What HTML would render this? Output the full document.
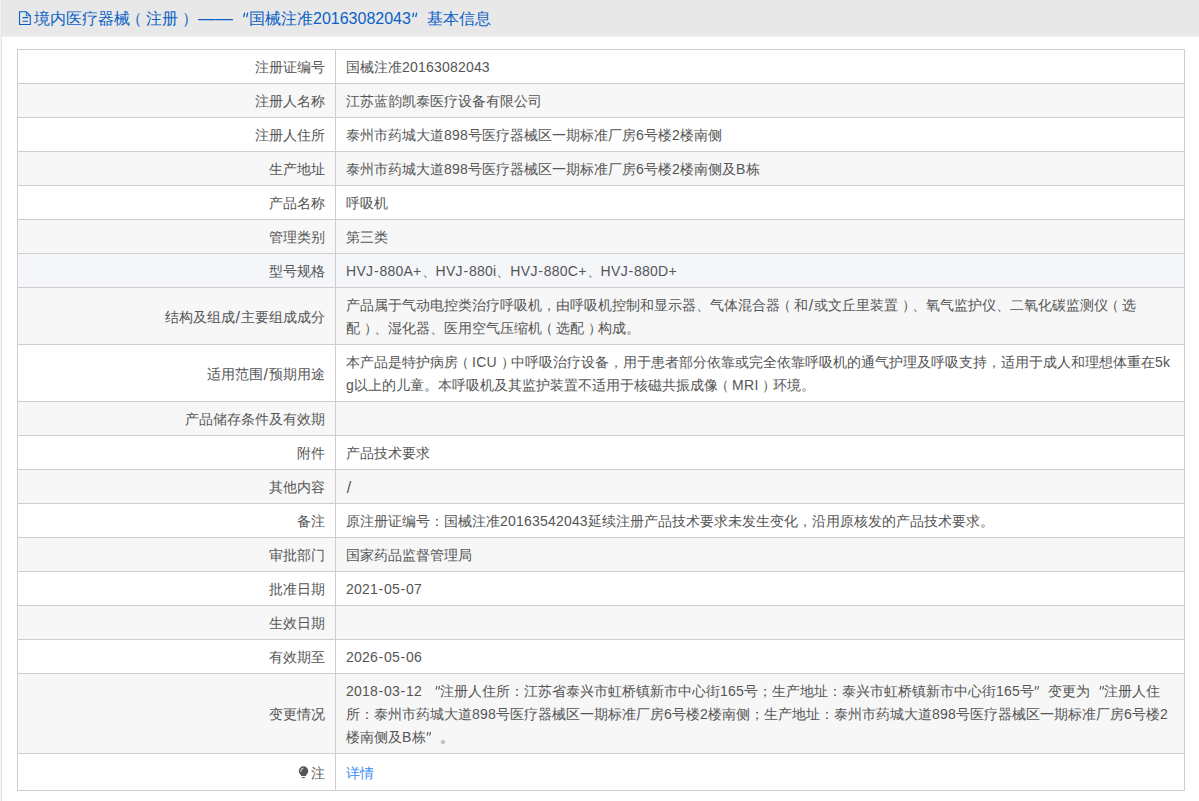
<!DOCTYPE html>
<html><head><meta charset="utf-8">
<style>
html,body{margin:0;padding:0;background:#fff;}
body{width:1199px;height:801px;overflow:hidden;position:relative;font-family:"Liberation Sans",sans-serif;}
.lstrip{position:absolute;left:0;top:0;width:1px;height:801px;background:#f3f3f3;}
.hline{position:absolute;left:2px;right:0;top:36px;height:1px;background:#f1f2f7;}
.lborder{position:absolute;left:1px;top:0;width:1px;height:801px;background:#e6e6e6;}
.hdr{position:absolute;left:2px;top:0;right:0;height:36px;background:#e8e8e8;}
.hdr .t{position:absolute;left:32px;top:7px;font-size:16px;line-height:24px;color:#0a62c6;white-space:nowrap;}
.hdr .a{letter-spacing:0;}
.hdr svg.ic{position:absolute;left:16px;top:11px;}
table{position:absolute;left:17px;top:49px;width:1168px;border-collapse:collapse;font-size:14px;color:#555;}
td{border:1px solid #cfcdcf;padding:6px 10px 4px;line-height:23px;vertical-align:middle;word-break:break-all;}
td.l{width:297px;text-align:right;}
tr.g td{background:#f7f7f7;}
tr.last td{padding-top:8px;padding-bottom:5px;}
tr.h td{background:#f4f6fa;}
a{color:#3a8ef5;text-decoration:none;}
.a{letter-spacing:0.2px;}
.al{letter-spacing:0.3px;}
.hy{margin:0 0.6px;}
.sl{font-size:16px;margin:0 0.8px;position:relative;top:1px;line-height:1px;}
.qo{display:inline-block;width:1em;text-align:right;position:relative;color:transparent;}
.qo svg,.qc svg{position:absolute;left:0;top:5px;}
.qc{display:inline-block;width:1em;text-align:left;position:relative;color:transparent;}
.hdr .qo svg,.hdr .qc svg{top:5px;}
.dash{display:inline-block;width:39px;text-align:right;transform:scaleX(1.09);transform-origin:right center;}
.po{position:relative;left:-0.22em;}
.pc{position:relative;left:0.25em;}
.bulb{display:inline-block;width:11px;height:14px;vertical-align:-2px;margin-right:2px;}
</style></head><body>
<div class="lstrip"></div><div class="lborder"></div><div class="hline"></div>
<div class="hdr"><svg class="ic" width="14" height="15" viewBox="0 0 14 15"><path d="M1.5 0.75H8.3L12.3 4.75V13.5H1.5Z" fill="none" stroke="#0a62c6" stroke-width="1.1"/><path d="M8.3 0.75V4.75H12.3" fill="none" stroke="#0a62c6" stroke-width="0.9"/><path d="M4.5 6.6H10M4.5 10.3H10" stroke="#0a62c6" stroke-width="1.1"/></svg><div class="t">境内医疗器械<span class="po">（</span>注册<span class="pc">）</span><span class="dash">——</span><span class="qo">“<svg width="16" height="8" viewBox="0 0 16 8"><path d="M11.6 1.1L10.8 4.6M14.6 1.1L13.8 4.6" stroke="#0a62c6" stroke-width="1.3" stroke-linecap="round"/></svg></span>国械注准<span class="a">20163082043</span><span class="qc">”<svg width="16" height="8" viewBox="0 0 16 8"><path d="M2.6 1.1L1.8 4.6M5.6 1.1L4.8 4.6" stroke="#0a62c6" stroke-width="1.3" stroke-linecap="round"/></svg></span>基本信息</div></div>
<table>
<tr><td class="l">注册证编号</td><td>国械注准<span class="a">20163082043</span></td></tr>
<tr class="g"><td class="l">注册人名称</td><td>江苏蓝韵凯泰医疗设备有限公司</td></tr>
<tr><td class="l">注册人住所</td><td>泰州市药城大道<span class="a">898</span>号医疗器械区一期标准厂房<span class="a">6</span>号楼<span class="a">2</span>楼南侧</td></tr>
<tr class="g"><td class="l">生产地址</td><td>泰州市药城大道<span class="a">898</span>号医疗器械区一期标准厂房<span class="a">6</span>号楼<span class="a">2</span>楼南侧及<span class="a"><span class="al">B</span></span>栋</td></tr>
<tr><td class="l">产品名称</td><td>呼吸机</td></tr>
<tr class="g"><td class="l">管理类别</td><td>第三类</td></tr>
<tr class="h"><td class="l">型号规格</td><td><span class="a"><span class="al">HVJ</span><span class="hy">-</span>880<span class="al">A+</span></span>、<span class="a"><span class="al">HVJ</span><span class="hy">-</span>880<span class="al">i</span></span>、<span class="a"><span class="al">HVJ</span><span class="hy">-</span>880<span class="al">C+</span></span>、<span class="a"><span class="al">HVJ</span><span class="hy">-</span>880<span class="al">D+</span></span></td></tr>
<tr class="g"><td class="l">结构及组成<span class="a"><span class="sl">/</span></span>主要组成成分</td><td>产品属于气动电控类治疗呼吸机，由呼吸机控制和显示器、气体混合器<span class="po">（</span>和<span class="a"><span class="sl">/</span></span>或文丘里装置<span class="pc">）</span>、氧气监护仪、二氧化碳监测仪<span class="po">（</span>选配<span class="pc">）</span>、湿化器、医用空气压缩机<span class="po">（</span>选配<span class="pc">）</span>构成。</td></tr>
<tr><td class="l">适用范围<span class="a"><span class="sl">/</span></span>预期用途</td><td>本产品是特护病房<span class="po">（</span><span class="a"><span class="al">ICU</span></span><span class="pc">）</span>中呼吸治疗设备，用于患者部分依靠或完全依靠呼吸机的通气护理及呼吸支持，适用于成人和理想体重在<span class="a">5<span class="al">kg</span></span>以上的儿童。本呼吸机及其监护装置不适用于核磁共振成像<span class="po">（</span><span class="a"><span class="al">MRI</span></span><span class="pc">）</span>环境。</td></tr>
<tr class="g"><td class="l">产品储存条件及有效期</td><td></td></tr>
<tr><td class="l">附件</td><td>产品技术要求</td></tr>
<tr class="g"><td class="l">其他内容</td><td><span class="a"><span class="sl">/</span></span></td></tr>
<tr><td class="l">备注</td><td>原注册证编号：国械注准<span class="a">20163542043</span>延续注册产品技术要求未发生变化，沿用原核发的产品技术要求。</td></tr>
<tr class="g"><td class="l">审批部门</td><td>国家药品监督管理局</td></tr>
<tr><td class="l">批准日期</td><td><span class="a">2021<span class="hy">-</span>05<span class="hy">-</span>07</span></td></tr>
<tr class="g"><td class="l">生效日期</td><td></td></tr>
<tr><td class="l">有效期至</td><td><span class="a">2026<span class="hy">-</span>05<span class="hy">-</span>06</span></td></tr>
<tr class="g"><td class="l">变更情况</td><td><span class="a">2018<span class="hy">-</span>03<span class="hy">-</span>12</span> <span class="qo">“<svg width="14" height="8" viewBox="0 0 14 8"><path d="M10.9 1.3L10.2 4.1M13.5 1.3L12.8 4.1" stroke="#555" stroke-width="1.15" stroke-linecap="round"/></svg></span>注册人住所：江苏省泰兴市虹桥镇新市中心街<span class="a">165</span>号；生产地址：泰兴市虹桥镇新市中心街<span class="a">165</span>号<span class="qc">”<svg width="14" height="8" viewBox="0 0 14 8"><path d="M1.9 1.3L1.2 4.1M4.5 1.3L3.8 4.1" stroke="#555" stroke-width="1.15" stroke-linecap="round"/></svg></span>变更为<span class="qo">“<svg width="14" height="8" viewBox="0 0 14 8"><path d="M10.9 1.3L10.2 4.1M13.5 1.3L12.8 4.1" stroke="#555" stroke-width="1.15" stroke-linecap="round"/></svg></span>注册人住所：泰州市药城大道<span class="a">898</span>号医疗器械区一期标准厂房<span class="a">6</span>号楼<span class="a">2</span>楼南侧；生产地址：泰州市药城大道<span class="a">898</span>号医疗器械区一期标准厂房<span class="a">6</span>号楼<span class="a">2</span>楼南侧及<span class="a"><span class="al">B</span></span>栋<span class="qc">”<svg width="14" height="8" viewBox="0 0 14 8"><path d="M1.9 1.3L1.2 4.1M4.5 1.3L3.8 4.1" stroke="#555" stroke-width="1.15" stroke-linecap="round"/></svg></span>。</td></tr>
<tr class="last"><td class="l"><svg class="bulb" viewBox="0 0 11 14"><path d="M0.75 5A4.75 4.75 0 0 1 10.25 5C10.25 7 8.6 8.3 7.8 9.9H3.2C2.4 8.3 0.75 7 0.75 5Z" fill="#555"/><path d="M2.6 5.6Q2.6 2.6 5.4 2.2" stroke="#fff" stroke-width="1" fill="none"/><path d="M3.7 11.6H7" stroke="#555" stroke-width="1"/></svg>注</td><td><a>详情</a></td></tr>
</table>
</body></html>
